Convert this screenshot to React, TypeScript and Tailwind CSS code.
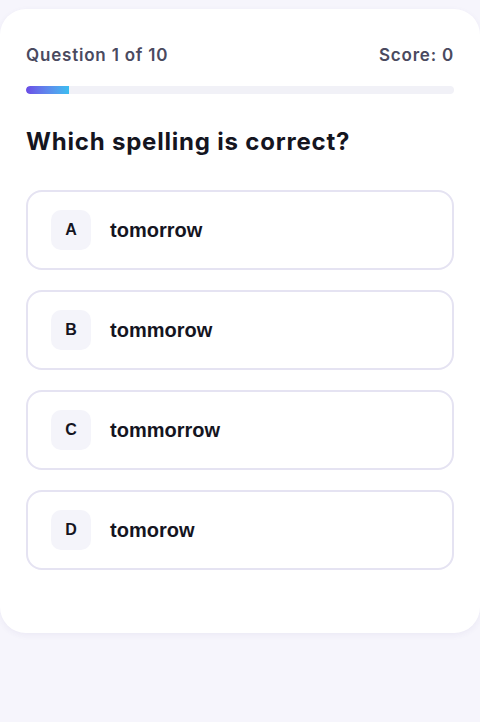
import React from 'react';

const options = [
  { key: 'A', text: 'tomorrow' },
  { key: 'B', text: 'tommorow' },
  { key: 'C', text: 'tommorrow' },
  { key: 'D', text: 'tomorow' },
];

const App: React.FC = () => {
  return (
    <div className="min-h-[722px] bg-[#f6f5fc] pt-[9px]">
      <div className="bg-white rounded-[26px] shadow-[0_2px_6px_rgba(60,50,140,0.06)] px-[26px] pt-[34px] pb-[63px]">
        <div className="flex items-center justify-between font-['Inter',sans-serif] text-[17px] font-semibold text-[#4a4a5f] leading-6 tracking-[0.8px]">
          <span>Question 1 of 10</span>
          <span>Score: 0</span>
        </div>

        <div className="mt-[19px] h-2 rounded-full bg-[#f1f1f7] overflow-hidden">
          <div className="h-full w-[10%] rounded-l-full bg-gradient-to-r from-[#6a4be6] to-[#38bdf0]" />
        </div>

        <h1 className="mt-8 font-['Inter',sans-serif] text-[24px] font-bold leading-8 text-[#15151f] tracking-[0.8px]">
          Which spelling is correct?
        </h1>

        <div className="mt-8 flex flex-col gap-5">
          {options.map((o) => (
            <button
              key={o.key}
              className="flex h-20 items-center rounded-2xl border-2 border-[#e5e3f2] bg-white pl-[23px] text-left"
            >
              <span className="flex h-10 w-10 items-center justify-center rounded-[10px] bg-[#f4f4fa] font-['Liberation_Sans',sans-serif] text-[16px] font-bold text-[#15151f]">
                {o.key}
              </span>
              <span className="ml-[19px] font-['Liberation_Sans',sans-serif] text-[20px] font-bold text-[#15151f]">
                {o.text}
              </span>
            </button>
          ))}
        </div>
      </div>
    </div>
  );
};

export default App;
